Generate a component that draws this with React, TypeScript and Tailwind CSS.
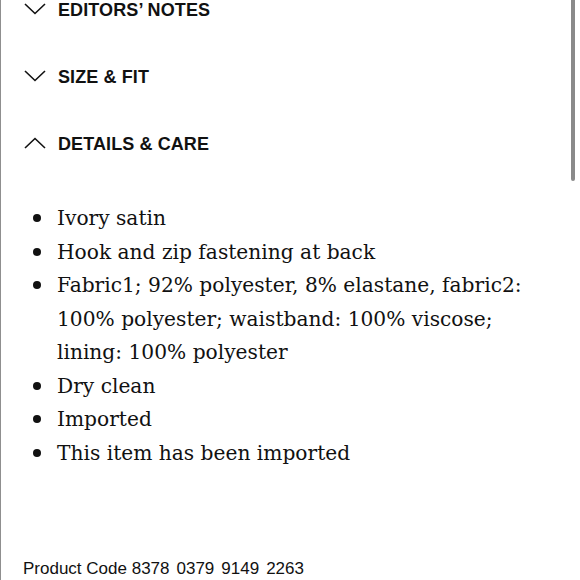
import React from 'react';

const sans = "font-['Liberation_Sans',Arial,sans-serif]";
const serif = "font-['DejaVu_Serif',Georgia,serif]";

function Chevron({ up = false }: { up?: boolean }) {
  return (
    <svg width="22" height="12" viewBox="0 0 22 12" fill="none" stroke="#111" strokeWidth={1.6} className="shrink-0">
      {up ? <polyline points="1,11 11,1.5 21,11" /> : <polyline points="1,1 11,10.5 21,1" />}
    </svg>
  );
}

function Section({ title, open = false }: { title: string; open?: boolean }) {
  return (
    <div className="flex items-start h-[67px]">
      <div className="w-[57px] pl-[23px] pt-[5px]">
        <Chevron up={open} />
      </div>
      <span className={`${sans} text-[18px] leading-[24px] font-bold text-[#111] tracking-[0.1px]`}>{title}</span>
    </div>
  );
}

const items: string[][] = [
  ['Ivory satin'],
  ['Hook and zip fastening at back'],
  ['Fabric1; 92% polyester, 8% elastane, fabric2:', '100% polyester; waistband: 100% viscose;', 'lining: 100% polyester'],
  ['Dry clean'],
  ['Imported'],
  ['This item has been imported'],
];

export default function App() {
  return (
    <div className="relative w-[580px] h-[580px] overflow-hidden bg-white border-l border-[#8f8f8f]">
      <div className="flex flex-col mt-[-2px]">
        <Section title="EDITORS’ NOTES" />
        <Section title="SIZE & FIT" />
        <Section title="DETAILS & CARE" open />
      </div>

      <ul className={`${serif} mt-[3px] text-[20.2px] leading-[33.5px] text-[#111]`}>
        {items.map((lines) => (
          <li key={lines[0]} className="flex">
            <span className="w-[56px] shrink-0 flex justify-end pr-[16px] pt-[12px]">
              <span className="block w-[8px] h-[8px] rounded-full bg-[#111]" />
            </span>
            <span className="whitespace-nowrap">
              {lines.map((l, i) => (
                <React.Fragment key={l}>
                  {i > 0 && <br />}
                  {l}
                </React.Fragment>
              ))}
            </span>
          </li>
        ))}
      </ul>

      <div className={`${sans} mt-[89px] pl-[22px] text-[17px] leading-[20px] text-[#111] flex`}>
        <span>Product Code 8378</span>
        <span className="ml-[7px]">0379</span>
        <span className="ml-[7px]">9149</span>
        <span className="ml-[7px]">2263</span>
      </div>

      <div className="absolute right-[5px] top-0 w-[4px] h-[181px] rounded-b-full bg-[#8a8a8a]" />
    </div>
  );
}
